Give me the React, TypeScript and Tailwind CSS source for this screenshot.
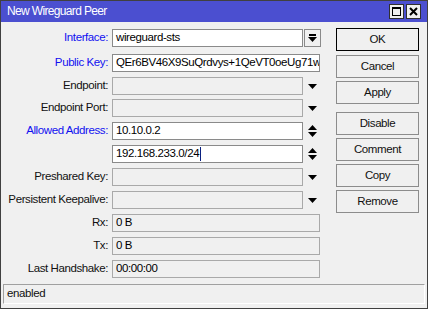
import type { ReactNode } from "react";

type Row = {
  label: string;
  value?: string;
  blue?: boolean;
  kind: "select" | "text" | "dropdown" | "updown" | "readonly";
  enabled?: boolean;
  cursor?: boolean;
  mt: string;
};

const rows: Row[] = [
  { label: "Interface:", value: "wireguard-sts", blue: true, kind: "select", enabled: true, mt: "mt-[7px]" },
  { label: "Public Key:", value: "QEr6BV46X9SuQrdvys+1QeVT0oeUg71wc", blue: true, kind: "text", enabled: true, mt: "mt-[7px]" },
  { label: "Endpoint:", kind: "dropdown", mt: "mt-[5px]" },
  { label: "Endpoint Port:", kind: "dropdown", mt: "mt-[4px]" },
  { label: "Allowed Address:", value: "10.10.0.2", blue: true, kind: "updown", enabled: true, mt: "mt-[5px]" },
  { label: "", value: "192.168.233.0/24", kind: "updown", enabled: true, cursor: true, mt: "mt-[5px]" },
  { label: "Preshared Key:", kind: "dropdown", mt: "mt-[5px]" },
  { label: "Persistent Keepalive:", kind: "dropdown", mt: "mt-[5px]" },
  { label: "Rx:", value: "0 B", kind: "readonly", mt: "mt-[5px]" },
  { label: "Tx:", value: "0 B", kind: "readonly", mt: "mt-[5px]" },
  { label: "Last Handshake:", value: "00:00:00", kind: "readonly", mt: "mt-[5px]" },
];

const buttons = [
  { name: "OK", mt: "mt-[6px]", focus: true },
  { name: "Cancel", mt: "mt-[4px]" },
  { name: "Apply", mt: "mt-[3px]" },
  { name: "Disable", mt: "mt-[8px]" },
  { name: "Comment", mt: "mt-[3px]" },
  { name: "Copy", mt: "mt-[3px]" },
  { name: "Remove", mt: "mt-[3px]" },
];

function DownTri() {
  return (
    <svg width="9" height="5" viewBox="0 0 9 5">
      <path d="M0 0h9L4.5 5z" fill="#000" />
    </svg>
  );
}

function UpDown() {
  return (
    <svg width="9" height="12" viewBox="0 0 9 12">
      <path d="M4.5 0L9 5H0z" fill="#000" />
      <path d="M0 7h9L4.5 12z" fill="#000" />
    </svg>
  );
}

function Field({ row }: { row: Row }) {
  const box = row.enabled
    ? "bg-white border border-[#8a8a8a]"
    : "bg-[#f0f0f0] border border-[#a9a9a9]";
  const wide = row.kind === "text" || row.kind === "readonly";
  let extra: ReactNode = null;
  if (row.kind === "select") {
    extra = (
      <div className="ml-px w-[17px] h-[18px] border border-[#8a8a8a] bg-[#f0f0f0] flex flex-col items-center justify-center">
        <div className="w-[7px] h-[1.5px] bg-black mb-px" />
        <DownTri />
      </div>
    );
  } else if (row.kind === "dropdown") {
    extra = (
      <div className="w-[18px] flex items-center justify-center pl-px">
        <DownTri />
      </div>
    );
  } else if (row.kind === "updown") {
    extra = (
      <div className="w-[18px] flex items-center justify-center pl-px">
        <UpDown />
      </div>
    );
  }
  return (
    <div className={`flex items-center h-[18px] ${row.mt}`}>
      <div
        className={`w-[108px] pr-px text-right whitespace-nowrap ${row.blue ? "text-[#1010f0]" : "text-[#111]"}`}
      >
        {row.label}
      </div>
      <div
        className={`ml-[3px] h-[18px] ${wide ? "w-[208px]" : "w-[191px]"} ${box} flex items-center px-[3px] overflow-hidden whitespace-nowrap`}
      >
        <span className="text-black">{row.value}</span>
        {row.cursor && <span className="w-px h-[14px] bg-[#0a2080] ml-px" />}
      </div>
      {extra}
    </div>
  );
}

export default function App() {
  return (
    <div className="w-[428px] h-[309px] bg-[#f0f0f0] border border-[#404040] flex flex-col text-[11.5px] tracking-[-0.4px] font-['Liberation_Sans',Arial,sans-serif] leading-none overflow-hidden">
      <div className="h-[22px] shrink-0 bg-[#4b4fd0] flex items-center justify-between pl-[6px] pr-[6px] -mt-px">
        <span className="text-white text-[12px] tracking-[-0.65px]">New Wireguard Peer</span>
        <div className="flex gap-[2px]">
          <div className="w-[15px] h-[15px] bg-[#f0f0f0] border border-[#303030] flex items-center justify-center">
            <div className="w-[9px] h-[9px] border border-black border-t-2" />
          </div>
          <div className="w-[15px] h-[15px] bg-[#f0f0f0] border border-[#303030] flex items-center justify-center">
            <svg width="9" height="9" viewBox="0 0 9 9">
              <path d="M1 1l7 7M8 1l-7 7" stroke="#000" strokeWidth="2" />
            </svg>
          </div>
        </div>
      </div>
      <div className="flex h-[262px] shrink-0">
        <div className="w-[335px] flex flex-col">
          {rows.map((r, i) => (
            <Field key={i} row={r} />
          ))}
        </div>
        <div className="w-[83px] flex flex-col">
          {buttons.map((b) => (
            <div
              key={b.name}
              className={`${b.mt} h-[23px] flex items-center justify-center bg-[#f0f0f0] text-[#111] ${b.focus ? "border border-black" : "border border-[#8c8c8c]"}`}
            >
              {b.name}
            </div>
          ))}
        </div>
      </div>
      <div className="mx-[2px] h-[20px] border-t border-l border-t-[#a0a0a0] border-l-[#a0a0a0] border-b border-r border-b-white border-r-white flex items-center px-[3px] text-[#111]">
        enabled
      </div>
    </div>
  );
}
